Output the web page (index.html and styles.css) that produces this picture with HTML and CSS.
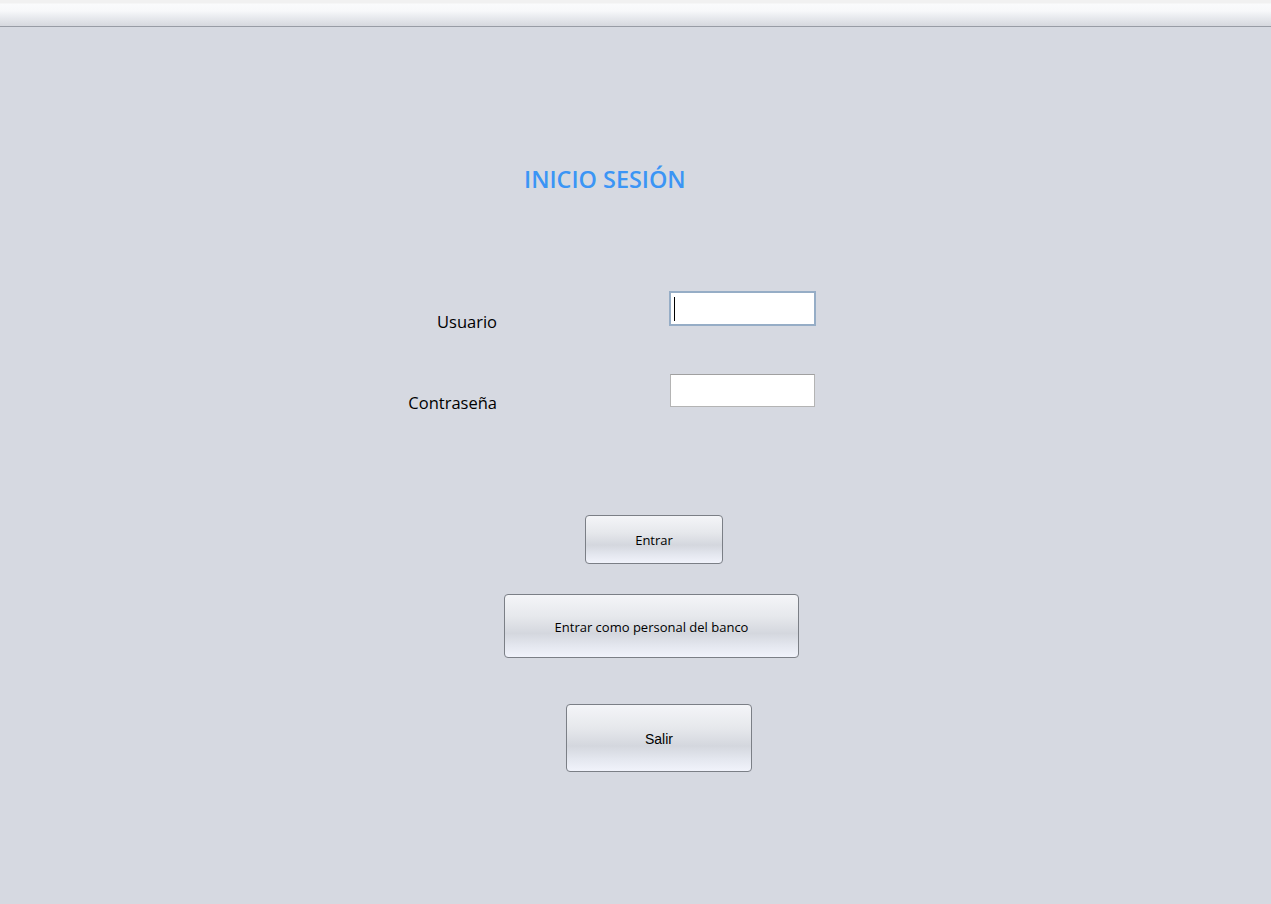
FILE: index.html
```html
<!DOCTYPE html>
<html lang="es">
<head>
<meta charset="utf-8">
<title>Inicio sesión</title>
<link rel="stylesheet" href="styles.css">
</head>
<body>
<div class="topbar"></div>
<main class="form">
  <h1 class="title">INICIO SESIÓN</h1>
  <div class="row row-user">
    <label class="label">Usuario</label>
    <div class="field focused"><span class="caret"></span></div>
  </div>
  <div class="row row-pass">
    <label class="label">Contraseña</label>
    <div class="field"></div>
  </div>
  <button class="btn btn-enter">Entrar</button>
  <button class="btn btn-staff">Entrar como personal del banco</button>
  <button class="btn btn-exit">Salir</button>
</main>
</body>
</html>
```
FILE: styles.css
```css
html, body {
  margin: 0;
  padding: 0;
}
body {
  background: #d6d9e1;
  width: 1271px;
  height: 904px;
  overflow: hidden;
  font-family: "Open Sans", "Noto Sans", sans-serif;
  color: #000;
}
.topbar {
  height: 26px;
  border-bottom: 1px solid #989ca5;
  background: linear-gradient(to bottom,
    #f1f1f1 0px, #f1f1f1 3px,
    #fafbfc 4px, #f7f8fa 11px,
    #e9ebef 17px, #d8dae0 25px, #d6d8df 26px);
}
.form {
  display: flex;
  flex-direction: column;
  align-items: flex-start;
}
.title {
  margin: 137px 0 0 524px;
  font-size: 23.4px;
  font-weight: 600;
  line-height: 30px;
  color: #3b95f5;
  letter-spacing: 0;
}
.row {
  display: flex;
  align-items: flex-start;
}
.label {
  width: 100px;
  text-align: right;
  font-size: 16.5px;
  line-height: 20px;
  margin-right: 172px;
}
.row-user {
  margin: 97px 0 0 397px;
}
.row-user .label {
  margin-top: 21px;
}
.row-pass {
  margin: 42px 0 0 397px;
}
.row-pass .label {
  margin-top: 19px;
  margin-right: 173px;
}
.field {
  box-sizing: border-box;
  width: 145px;
  height: 33px;
  background: #fff;
  border: 1px solid #b4b4b4;
  border-top-color: #a0a0a0;
}
.field.focused {
  width: 147px;
  height: 35px;
  border: 2px solid #96adc6;
  padding: 4px 0 0 3px;
}
.caret {
  display: block;
  width: 1px;
  height: 24px;
  background: #000;
}
.btn {
  box-sizing: border-box;
  border: 1px solid #7b7f86;
  border-radius: 4px;
  background: linear-gradient(to bottom,
    #f4f5f8 0%, #e6e8ec 35%, #d4d7de 62%, #e4e7ef 82%, #f1f3fb 100%);
  font-family: "Open Sans", "Noto Sans", sans-serif;
  font-size: 13px;
  color: #000;
  padding: 1px 0 0 0;
  text-align: center;
  cursor: default;
}
.btn-enter {
  margin: 102px 0 0 585px;
  width: 138px;
  height: 49px;
}
.btn-staff {
  margin: 30px 0 0 504px;
  width: 295px;
  height: 64px;
}
.btn-exit {
  margin: 46px 0 0 566px;
  width: 186px;
  height: 68px;
  font-family: "Liberation Sans", Arial, sans-serif;
  font-size: 14px;
}
```
